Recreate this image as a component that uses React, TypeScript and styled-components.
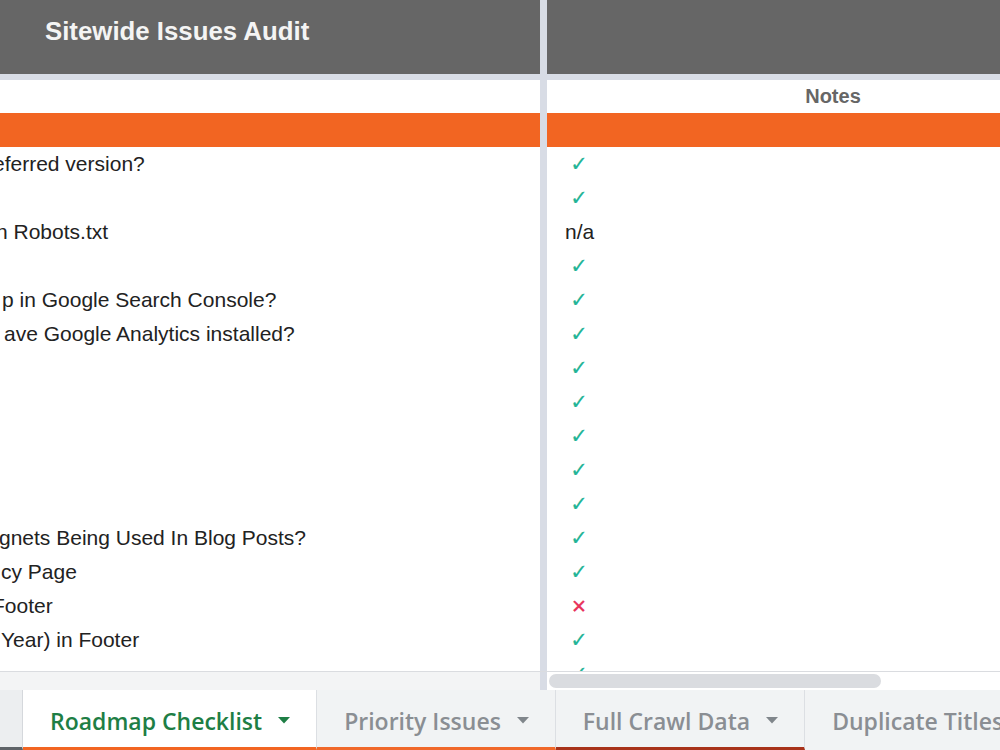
import React from "react";
import styled, { createGlobalStyle } from "styled-components";

const GlobalStyle = createGlobalStyle`
  html, body { margin: 0; padding: 0; background: #ffffff; }
  body { overflow: hidden; }
`;

const Page = styled.div`
  width: 1000px;
  height: 750px;
  display: flex;
  flex-direction: column;
  overflow: hidden;
  font-family: "Liberation Sans", Arial, sans-serif;
`;

const Sheet = styled.div`
  height: 671px;
  flex-shrink: 0;
  display: flex;
  overflow: hidden;
  border-bottom: 1px solid #dadce0;
`;

const Pane = styled.div<{ $frozen?: boolean }>`
  display: flex;
  flex-direction: column;
  flex-shrink: 0;
  width: ${(p) => (p.$frozen ? "540px" : "572px")};
  border-left: ${(p) => (p.$frozen ? "none" : "7px solid #d8dce5")};
`;

const TitleCell = styled.div`
  flex-shrink: 0;
  box-sizing: border-box;
  background: #666666;
  border-bottom: 6px solid #d9dde6;
  height: 80px;
  display: flex;
  align-items: center;
  padding: 0 0 12px 45px;
  color: #f4f4f4;
  font-size: 25.8px;
  font-weight: 700;
  white-space: nowrap;
`;

const HeadCell = styled.div`
  height: 33px;
  flex-shrink: 0;
  display: flex;
  align-items: center;
  justify-content: center;
  color: #666666;
  font-size: 20px;
  font-weight: 700;
  background: #ffffff;
`;

const SectionBand = styled.div`
  height: 34px;
  flex-shrink: 0;
  background: #f26522;
`;

const Row = styled.div<{ $indent?: number }>`
  height: 34px;
  flex-shrink: 0;
  display: flex;
  align-items: center;
  padding-left: ${(p) => (p.$indent ?? 0)}px;
  font-size: 21px;
  color: #222222;
  white-space: nowrap;
  overflow: hidden;
`;

const RowText = styled.span<{ $shift?: number }>`
  display: block;
  margin-left: ${(p) => p.$shift ?? 0}px;
`;

const Mark = styled.span<{ $kind: "ok" | "no" }>`
  display: inline-block;
  width: 18px;
  margin-left: 5px;
  text-align: center;
  font-family: "DejaVu Sans", sans-serif;
  font-size: ${(p) => (p.$kind === "ok" ? "21px" : "19px")};
  color: ${(p) => (p.$kind === "ok" ? "#22b496" : "#e8305a")};
  -webkit-text-stroke: 0.2px currentColor;
`;

const ScrollStrip = styled.div`
  height: 18px;
  flex-shrink: 0;
  display: flex;
`;

const StripFrozen = styled.div`
  width: 540px;
  flex-shrink: 0;
  background: #f3f4f5;
`;

const StripTrack = styled.div`
  flex: 1;
  border-left: 7px solid #d8dce5;
  background: #ffffff;
  display: flex;
  align-items: center;
  padding-left: 2px;
`;

const Thumb = styled.div`
  width: 332px;
  height: 14px;
  border-radius: 7px;
  background: #dadce0;
`;

const TabBar = styled.div`
  height: 60px;
  flex-shrink: 0;
  display: flex;
  background: #f1f3f4;
  overflow: hidden;
`;

const TabLead = styled.div`
  width: 23px;
  flex-shrink: 0;
  background: #eceef0;
  border-right: 1px solid #d5d8dc;
  border-bottom: 3px solid #5f6368;
  box-sizing: border-box;
`;

const Tab = styled.div<{ $active?: boolean; $tone?: string }>`
  flex-shrink: 0;
  box-sizing: border-box;
  display: flex;
  align-items: center;
  gap: 16px;
  padding: 4px 26px 0 27px;
  font-family: "Open Sans", "Noto Sans", sans-serif;
  font-size: 23px;
  font-weight: 600;
  white-space: nowrap;
  color: ${(p) => (p.$active ? "#1e7e45" : "#8a8e93")};
  background: ${(p) => (p.$active ? "#ffffff" : "#f1f3f4")};
  border-right: 1px solid #dcdfe3;
  border-bottom: 3px solid ${(p) => p.$tone ?? "transparent"};
`;

const Caret = ({ color }: { color: string }) => (
  <svg width="12" height="7" viewBox="0 0 12 7" aria-hidden>
    <path d="M0 0 L12 0 L6 6.5 Z" fill={color} />
  </svg>
);

type Item = { text: string; shift?: number; mark: "ok" | "no" | "na" };

const items: Item[] = [
  { text: "eferred version?", shift: -7, mark: "ok" },
  { text: "", mark: "ok" },
  { text: "n Robots.txt", shift: -4, mark: "na" },
  { text: "", mark: "ok" },
  { text: "p in Google Search Console?", shift: 2, mark: "ok" },
  { text: "ave Google Analytics installed?", shift: 4, mark: "ok" },
  { text: "", mark: "ok" },
  { text: "", mark: "ok" },
  { text: "", mark: "ok" },
  { text: "", mark: "ok" },
  { text: "", mark: "ok" },
  { text: "gnets Being Used In Blog Posts?", shift: -1, mark: "ok" },
  { text: "cy Page", shift: 1, mark: "ok" },
  { text: "Footer", shift: -8, mark: "no" },
  { text: "Year) in Footer", shift: 1, mark: "ok" },
  { text: "", mark: "ok" },
];

const tabs = [
  { label: "Roadmap Checklist", active: true, tone: "#f26522", caret: true },
  { label: "Priority Issues", tone: "#f0682a", caret: true },
  { label: "Full Crawl Data", tone: "#a8321a", caret: true },
  { label: "Duplicate Titles", caret: false },
];

export default function App() {
  return (
    <>
      <GlobalStyle />
      <Page>
        <Sheet>
          <Pane $frozen>
            <TitleCell>Sitewide Issues Audit</TitleCell>
            <HeadCell />
            <SectionBand />
            {items.map((it, i) => (
              <Row key={i}>
                <RowText $shift={it.shift}>{it.text}</RowText>
              </Row>
            ))}
          </Pane>
          <Pane>
            <TitleCell />
            <HeadCell>Notes</HeadCell>
            <SectionBand />
            {items.map((it, i) => (
              <Row key={i} $indent={18}>
                {it.mark === "na" ? (
                  "n/a"
                ) : (
                  <Mark $kind={it.mark}>{it.mark === "ok" ? "✓" : "✕"}</Mark>
                )}
              </Row>
            ))}
          </Pane>
        </Sheet>
        <ScrollStrip>
          <StripFrozen />
          <StripTrack>
            <Thumb />
          </StripTrack>
        </ScrollStrip>
        <TabBar>
          <TabLead />
          {tabs.map((t) => (
            <Tab key={t.label} $active={t.active} $tone={t.tone}>
              {t.label}
              {t.caret && <Caret color={t.active ? "#1e7e45" : "#80868b"} />}
            </Tab>
          ))}
        </TabBar>
      </Page>
    </>
  );
}
